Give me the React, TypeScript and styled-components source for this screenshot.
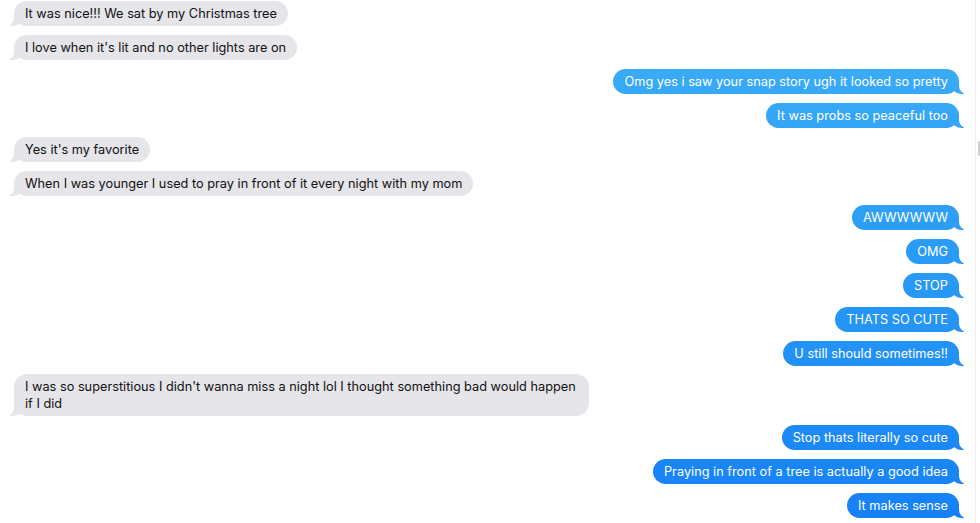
import React from "react";
import styled, { createGlobalStyle, css } from "styled-components";

const Global = createGlobalStyle`
  html, body { margin: 0; padding: 0; background: #ffffff; }
  body { font-family: Inter, "Noto Sans", "Liberation Sans", sans-serif; -webkit-font-smoothing: antialiased; }
`;

const Page = styled.div`
  display: flex;
  width: 980px;
  height: 523px;
  overflow: hidden;
  background: #fff;
`;

const Thread = styled.div`
  flex: 1;
  display: flex;
  flex-direction: column;
  gap: 9px;
  padding: 1px 16px 0 14px;
`;

const Scroll = styled.div`
  width: 4px;
  border-left: 1px solid #ececec;
  position: relative;
`;

const Thumb = styled.div`
  position: absolute;
  top: 141px;
  right: 0;
  width: 2px;
  height: 15px;
  background: #cfcfcf;
  border-radius: 1px;
`;

const Row = styled.div<{ $me: boolean }>`
  display: flex;
  justify-content: ${(p) => (p.$me ? "flex-end" : "flex-start")};
`;

const blueBg = css`
  background: linear-gradient(180deg, #3fb0f6 0px, #2a9bf5 260px, #1580f6 523px);
  background-attachment: fixed;
`;

const Bubble = styled.div<{ $me: boolean; $gap?: number }>`
  position: relative;
  z-index: 0;
  max-width: 553px;
  padding: 4px 11px;
  border-radius: 13px;
  font-size: 12.75px;
  line-height: 17px;
  color: ${(p) => (p.$me ? "#ffffff" : "#111111")};
  ${(p) => (p.$me ? blueBg : css`background: #e5e5ea;`)}
  margin-top: ${(p) => p.$gap ?? 0}px;

  &::before,
  &::after {
    content: "";
    position: absolute;
    bottom: 0;
    z-index: -1;
    height: 14px;
  }

  &::before {
    width: 14px;
    ${(p) => (p.$me ? blueBg : css`background: #e5e5ea;`)}
    ${(p) =>
      p.$me
        ? css`right: -5px; border-bottom-left-radius: 12px;`
        : css`left: -4px; border-bottom-right-radius: 12px;`}
  }

  &::after {
    width: 10px;
    background: #ffffff;
    ${(p) =>
      p.$me
        ? css`right: -10px; border-bottom-left-radius: 8px;`
        : css`left: -10px; border-bottom-right-radius: 8px;`}
  }
`;

type Msg = { me: boolean; text: string; gap?: number };

const messages: Msg[] = [
  { me: false, text: "It was nice!!! We sat by my Christmas tree" },
  { me: false, text: "I love when it's lit and no other lights are on" },
  { me: true, text: "Omg yes i saw your snap story ugh it looked so pretty" },
  { me: true, text: "It was probs so peaceful too" },
  { me: false, text: "Yes it's my favorite" },
  { me: false, text: "When I was younger I used to pray in front of it every night with my mom" },
  { me: true, text: "AWWWWWW" },
  { me: true, text: "OMG" },
  { me: true, text: "STOP" },
  { me: true, text: "THATS SO CUTE" },
  { me: true, text: "U still should sometimes!!" },
  {
    me: false,
    gap: -1,
    text: "I was so superstitious I didn't wanna miss a night lol I thought something bad would happen if I did",
  },
  { me: true, gap: 0, text: "Stop thats literally so cute" },
  { me: true, text: "Praying in front of a tree is actually a good idea" },
  { me: true, text: "It makes sense" },
];

export default function App() {
  return (
    <Page>
      <Global />
      <Thread>
        {messages.map((m, i) => (
          <Row key={i} $me={m.me}>
            <Bubble $me={m.me} $gap={m.gap}>
              {m.text}
            </Bubble>
          </Row>
        ))}
      </Thread>
      <Scroll>
        <Thumb />
      </Scroll>
    </Page>
  );
}
